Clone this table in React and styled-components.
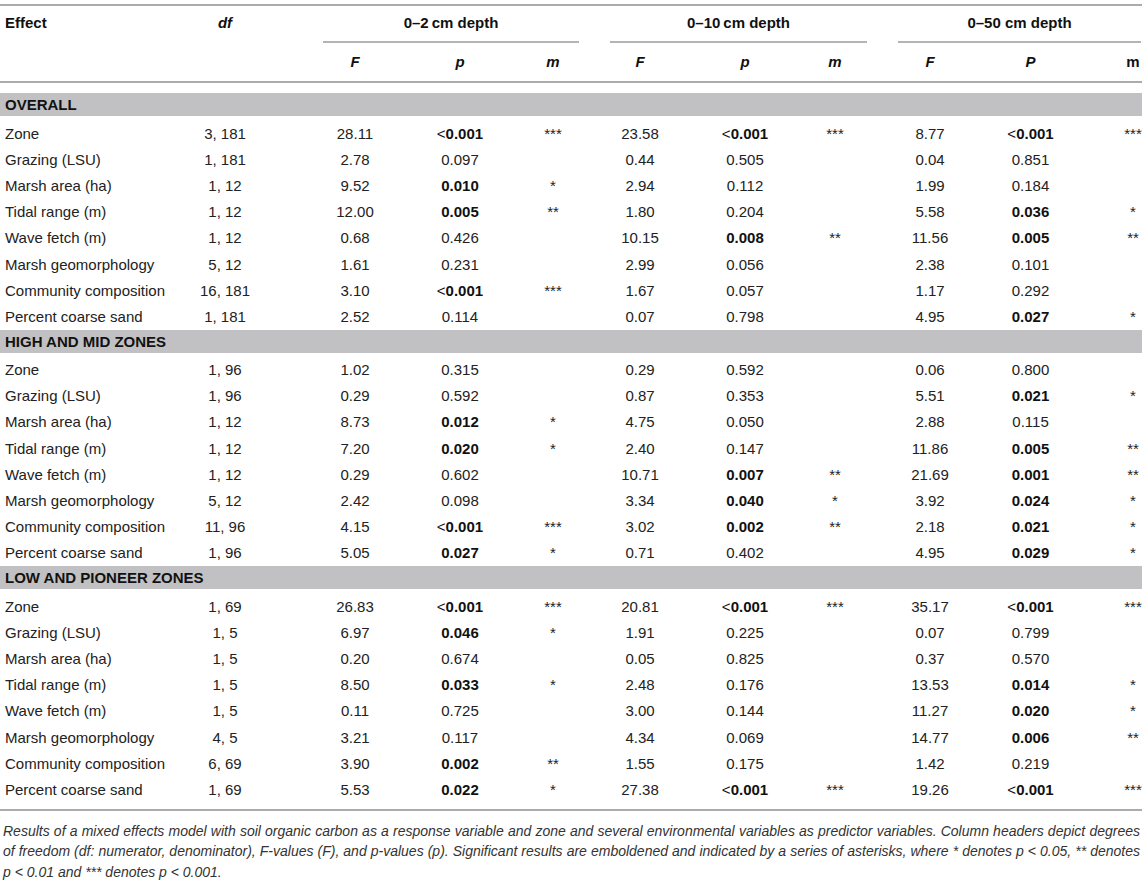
import React from "react";
import styled, { createGlobalStyle } from "styled-components";

const Global = createGlobalStyle`
  body {
    margin: 0;
    background: #fff;
    font-family: "Liberation Sans", Arial, Helvetica, sans-serif;
    color: #222;
  }
`;

const Page = styled.div`
  width: 1142px;
  padding-top: 4px;
`;

const Table = styled.table`
  width: 100%;
  border-collapse: collapse;
  table-layout: fixed;
  border-top: 2px solid #ababab;
  font-size: 15px;
`;

const HeadCell = styled.th`
  padding: 0;
  font-weight: bold;
  color: #111;
  text-align: ${p => (p.$left ? "left" : "center")};
  vertical-align: ${p => (p.$top ? "top" : "middle")};
  line-height: 18px;
  height: ${p => (p.$tall ? "38px" : "auto")};
  font-style: ${p => (p.$italic ? "italic" : "normal")};
  border-bottom: ${p => (p.$rule ? "2px solid #ababab" : "none")};
`;

const EffectHead = styled.div`
  padding: 8px ${p => p.$right || 0}px 0 ${p => (p.$right ? 0 : 5)}px;
`;

const GroupLabel = styled.div`
  margin: 0 ${p => p.$right}px 0 ${p => p.$left}px;
  padding: 8px 0 9px;
  border-bottom: 2px solid #b4b4b4;
  text-align: center;
`;

const SubLabel = styled.span`
  display: inline-block;
  padding: 0 ${p => (p.$shift < 0 ? -2 * p.$shift : 0)}px 0 ${p => (p.$shift > 0 ? 2 * p.$shift : 0)}px;
`;

const BandCell = styled.td`
  padding: ${p => (p.$first ? "10px" : "0")} 0 4px;
`;

const Band = styled.div`
  height: 23px;
  line-height: 23px;
  background: #c1c1c3;
  padding-left: 5px;
  font-weight: bold;
  color: #111;
`;

const Cell = styled.td`
  height: 26.2px;
  padding: 0 ${p => (p.$shift < 0 ? -2 * p.$shift : 0)}px 0 ${p => (p.$shift > 0 ? 2 * p.$shift : 0)}px;
  text-align: center;
  vertical-align: middle;
  white-space: nowrap;
  font-weight: ${p => (p.$bold ? "bold" : "normal")};
  color: ${p => (p.$bold ? "#111" : "#222")};
`;

const NameCell = styled(Cell)`
  text-align: left;
  padding: 0 0 0 5px;
`;

const Less = styled.span`
  font-weight: normal;
`;

const Rule = styled.div`
  margin-top: 6px;
  border-top: 2px solid #ababab;
`;

const Caption = styled.p`
  margin: 10px 0 0;
  padding: 0 2px 0 3px;
  font-size: 14px;
  line-height: 20.5px;
  font-style: italic;
  color: #333;
  text-align: justify;
`;

// column widths and how far each column's centre is nudged
const cols = [
  { w: 180, s: 0 },
  { w: 110, s: -10 },
  { w: 117, s: 6.5 },
  { w: 100, s: 3 },
  { w: 90, s: 1 },
  { w: 96, s: -5 },
  { w: 97, s: 3.5 },
  { w: 93, s: -1.5 },
  { w: 97, s: -1.5 },
  { w: 101, s: 0 },
  { w: 61, s: 21.5 },
];

const groups = [
  { label: "0–2\u2009cm depth", left: 33, right: 18 },
  { label: "0–10\u2009cm depth", left: 13, right: 16 },
  { label: "0–50 cm depth", left: 15, right: 1 },
];

const subHeads = ["F", "p", "m", "F", "p", "m", "F", "P", "m"];

const sections = [
  {
    title: "OVERALL",
    rows: [
      ["Zone", "3, 181", "28.11", "<0.001", "***", "23.58", "<0.001", "***", "8.77", "<0.001", "***"],
      ["Grazing (LSU)", "1, 181", "2.78", "0.097", "", "0.44", "0.505", "", "0.04", "0.851", ""],
      ["Marsh area (ha)", "1, 12", "9.52", "0.010", "*", "2.94", "0.112", "", "1.99", "0.184", ""],
      ["Tidal range (m)", "1, 12", "12.00", "0.005", "**", "1.80", "0.204", "", "5.58", "0.036", "*"],
      ["Wave fetch (m)", "1, 12", "0.68", "0.426", "", "10.15", "0.008", "**", "11.56", "0.005", "**"],
      ["Marsh geomorphology", "5, 12", "1.61", "0.231", "", "2.99", "0.056", "", "2.38", "0.101", ""],
      ["Community composition", "16, 181", "3.10", "<0.001", "***", "1.67", "0.057", "", "1.17", "0.292", ""],
      ["Percent coarse sand", "1, 181", "2.52", "0.114", "", "0.07", "0.798", "", "4.95", "0.027", "*"],
    ],
  },
  {
    title: "HIGH AND MID ZONES",
    rows: [
      ["Zone", "1, 96", "1.02", "0.315", "", "0.29", "0.592", "", "0.06", "0.800", ""],
      ["Grazing (LSU)", "1, 96", "0.29", "0.592", "", "0.87", "0.353", "", "5.51", "0.021", "*"],
      ["Marsh area (ha)", "1, 12", "8.73", "0.012", "*", "4.75", "0.050", "", "2.88", "0.115", ""],
      ["Tidal range (m)", "1, 12", "7.20", "0.020", "*", "2.40", "0.147", "", "11.86", "0.005", "**"],
      ["Wave fetch (m)", "1, 12", "0.29", "0.602", "", "10.71", "0.007", "**", "21.69", "0.001", "**"],
      ["Marsh geomorphology", "5, 12", "2.42", "0.098", "", "3.34", "0.040", "*", "3.92", "0.024", "*"],
      ["Community composition", "11, 96", "4.15", "<0.001", "***", "3.02", "0.002", "**", "2.18", "0.021", "*"],
      ["Percent coarse sand", "1, 96", "5.05", "0.027", "*", "0.71", "0.402", "", "4.95", "0.029", "*"],
    ],
  },
  {
    title: "LOW AND PIONEER ZONES",
    rows: [
      ["Zone", "1, 69", "26.83", "<0.001", "***", "20.81", "<0.001", "***", "35.17", "<0.001", "***"],
      ["Grazing (LSU)", "1, 5", "6.97", "0.046", "*", "1.91", "0.225", "", "0.07", "0.799", ""],
      ["Marsh area (ha)", "1, 5", "0.20", "0.674", "", "0.05", "0.825", "", "0.37", "0.570", ""],
      ["Tidal range (m)", "1, 5", "8.50", "0.033", "*", "2.48", "0.176", "", "13.53", "0.014", "*"],
      ["Wave fetch (m)", "1, 5", "0.11", "0.725", "", "3.00", "0.144", "", "11.27", "0.020", "*"],
      ["Marsh geomorphology", "4, 5", "3.21", "0.117", "", "4.34", "0.069", "", "14.77", "0.006", "**"],
      ["Community composition", "6, 69", "3.90", "0.002", "**", "1.55", "0.175", "", "1.42", "0.219", ""],
      ["Percent coarse sand", "1, 69", "5.53", "0.022", "*", "27.38", "<0.001", "***", "19.26", "<0.001", "***"],
    ],
  },
];

const isPCol = i => i === 3 || i === 6 || i === 9;
const significant = v => v.startsWith("<") || parseFloat(v) < 0.05;

const Value = ({ v }) =>
  v.startsWith("<") ? (
    <>
      <Less>&lt;</Less>
      {v.slice(1)}
    </>
  ) : (
    v
  );

const Row = ({ row }) => (
  <tr>
    <NameCell>{row[0]}</NameCell>
    {row.slice(1).map((v, j) => {
      const i = j + 1;
      const bold = isPCol(i) && significant(v);
      return (
        <Cell key={i} $shift={cols[i].s} $bold={bold}>
          <Value v={v} />
        </Cell>
      );
    })}
  </tr>
);

const App = () => (
  <Page>
    <Global />
    <Table>
      <colgroup>
        {cols.map((c, i) => (
          <col key={i} style={{ width: c.w }} />
        ))}
      </colgroup>
      <thead>
        <tr>
          <HeadCell $left $top>
            <EffectHead>Effect</EffectHead>
          </HeadCell>
          <HeadCell $top $italic>
            <EffectHead $right={20}>df</EffectHead>
          </HeadCell>
          {groups.map(g => (
            <HeadCell key={g.label} colSpan={3} $top>
              <GroupLabel $left={g.left} $right={g.right}>
                {g.label}
              </GroupLabel>
            </HeadCell>
          ))}
        </tr>
        <tr>
          <HeadCell $tall $rule />
          <HeadCell $tall $rule />
          {subHeads.map((h, j) => (
            <HeadCell key={j} $tall $rule $italic={j !== 8}>
              <SubLabel $shift={cols[j + 2].s}>{h}</SubLabel>
            </HeadCell>
          ))}
        </tr>
      </thead>
      {sections.map((sec, k) => (
        <tbody key={sec.title}>
          <tr>
            <BandCell colSpan={11} $first={k === 0}>
              <Band>{sec.title}</Band>
            </BandCell>
          </tr>
          {sec.rows.map((r, i) => (
            <Row key={i} row={r} />
          ))}
        </tbody>
      ))}
    </Table>
    <Rule />
    <Caption>
      Results of a mixed effects model with soil organic carbon as a response variable and zone and several
      environmental variables as predictor variables. Column headers depict degrees of freedom (df: numerator,
      denominator), F-values (F), and p-values (p). Significant results are emboldened and indicated by a series of
      asterisks, where * denotes p&nbsp;&lt;&nbsp;0.05, ** denotes p&nbsp;&lt;&nbsp;0.01 and *** denotes
      p&nbsp;&lt;&nbsp;0.001.
    </Caption>
  </Page>
);

export default App;
